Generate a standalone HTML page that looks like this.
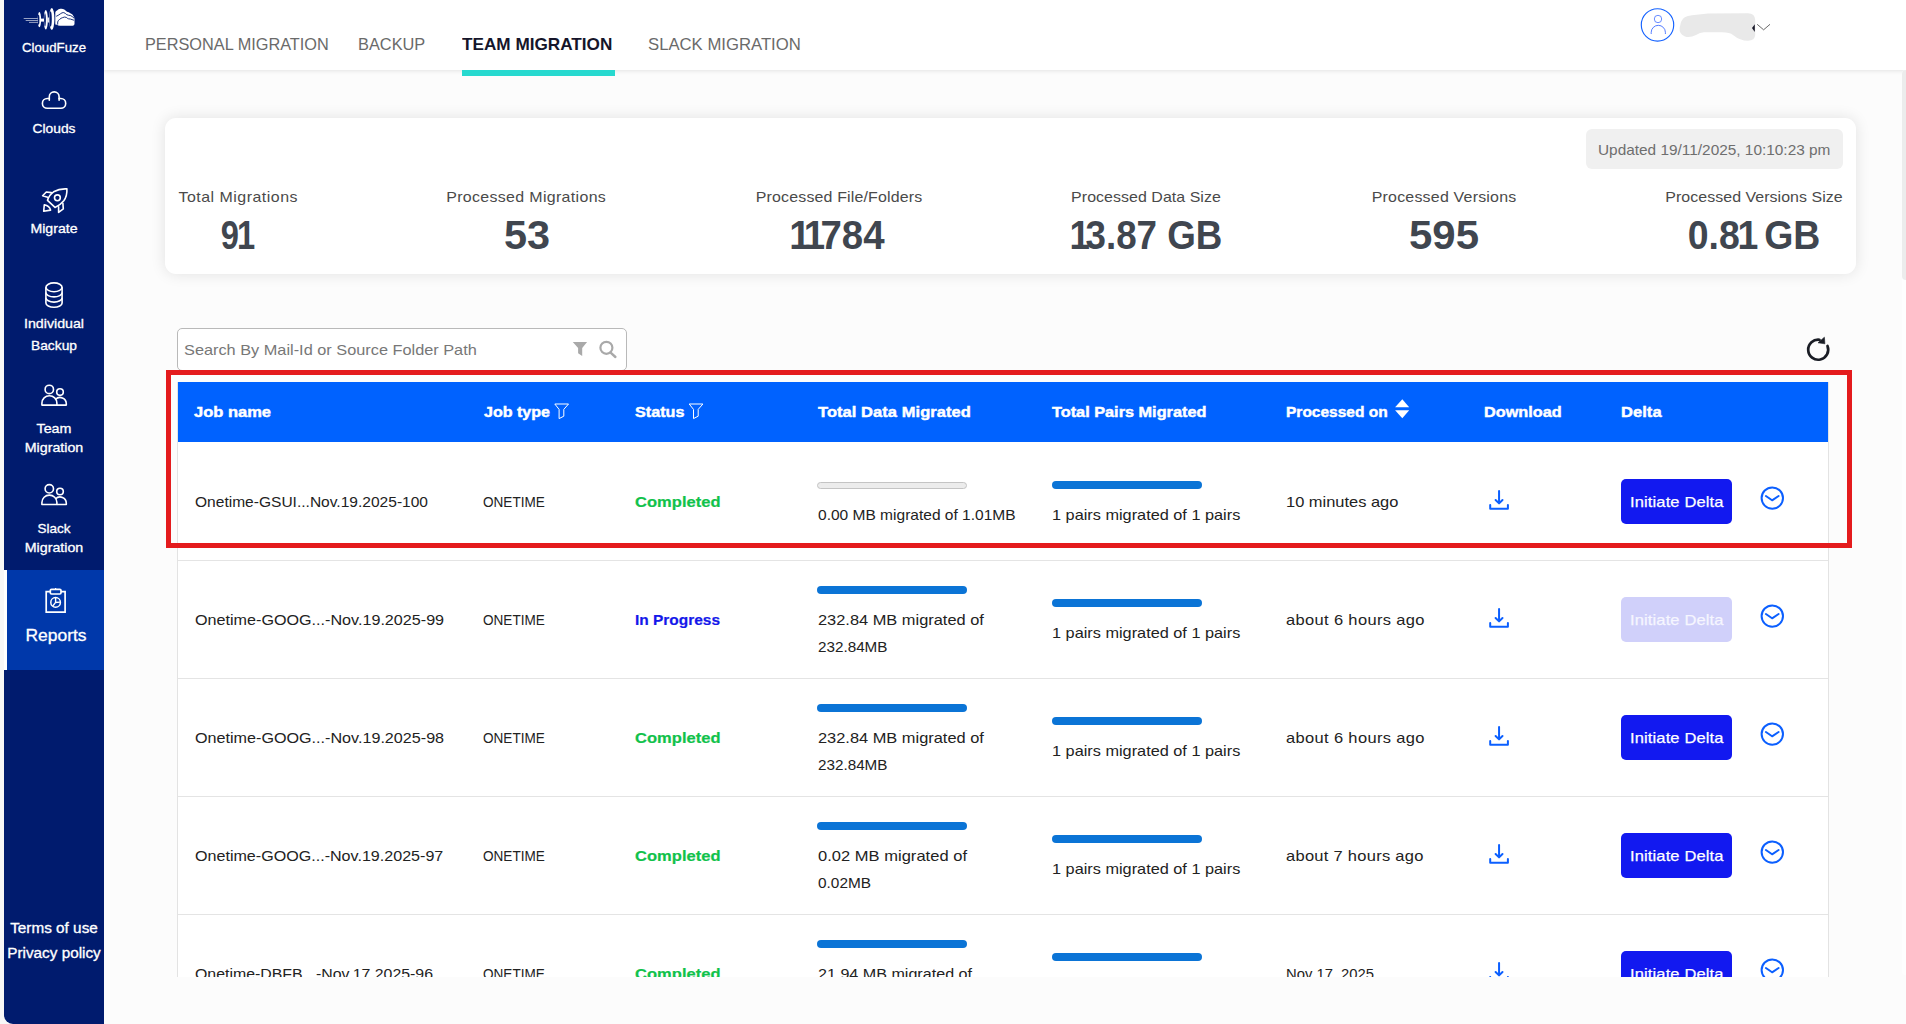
<!DOCTYPE html>
<html><head><meta charset="utf-8"><title>CloudFuze Reports</title>
<style>
html,body{margin:0;padding:0;}
html{width:1906px;height:1024px;overflow:hidden;}
#page{position:absolute;left:0;top:0;width:1906px;height:1024px;overflow:hidden;}
body{width:1906px;height:1024px;overflow:hidden;background:#f7f7f7;position:relative;font-family:"Liberation Sans",sans-serif;}
.abs{position:absolute;}
.t{position:absolute;white-space:pre;font-family:"Liberation Sans",sans-serif;}
#side{position:absolute;left:4px;top:0;width:100px;height:1024px;background:#001b6e;border-bottom-left-radius:9px;}
#side .active{position:absolute;left:0;top:570px;width:97px;height:100px;background:#0038aa;border-left:3px solid #fff;}
#main{position:absolute;left:104px;top:0;width:1802px;height:1024px;background:#fcfcfc;}
#topbar{position:absolute;left:104px;top:0;width:1802px;height:70px;background:#fff;box-shadow:0 1px 4px rgba(0,0,0,0.10);}
#tabline{position:absolute;left:462px;top:69.5px;width:153px;height:6.5px;background:#27d9cf;}
#card{position:absolute;left:165px;top:118px;width:1691px;height:156px;background:#fff;border-radius:11px;box-shadow:0 0 15px rgba(0,0,0,0.11);}
#upd{position:absolute;left:1586px;top:129px;width:257px;height:40px;background:#f0f0f0;border-radius:6px;}
#search{position:absolute;left:177px;top:328px;width:448px;height:41px;background:#fff;border:1px solid #b9b9b9;border-radius:5px;}
#table{position:absolute;left:177px;top:382px;width:1652px;height:595px;background:#fff;border-left:1px solid #e3e3e3;border-right:1px solid #e3e3e3;box-sizing:border-box;}
#thead{position:absolute;left:178px;top:382px;width:1650px;height:60px;background:#0062ff;}
.rowline{position:absolute;left:178px;width:1650px;height:1px;background:#e4e4e4;}
#redbox{position:absolute;left:166px;top:370px;width:1686px;height:178px;border:5px solid #e41b1d;box-sizing:border-box;}
.btn{position:absolute;left:1621px;width:111px;height:45px;background:#1219f0;border-radius:5px;}
.btn.dis{background:#d0d0fa;}
.bar{position:absolute;height:8px;width:150px;border-radius:4px;background:#0b74d6;}
.bar.empty{height:7px;background:#ececec;border:1px solid #c4c4c4;box-sizing:border-box;}
#clip{position:absolute;left:104px;top:977px;width:1802px;height:47px;background:#fcfcfc;}
#sbar{position:absolute;left:1902px;top:70px;width:4px;height:905px;background:#fefefe;border-radius:4px 0 0 4px;}
#sthumb{position:absolute;left:1902px;top:70px;width:4px;height:210px;background:#ececec;border-radius:4px 0 0 4px;}
svg{position:absolute;overflow:visible;}
.t i{font-style:normal;margin:0 -0.12em 0 -0.06em;}

</style></head>
<body>
<div id="page">
<div id="main"></div>
<div id="topbar"></div>
<div id="tabline"></div>
<div id="side"><div class="active"></div></div>
<div id="card"></div>
<div id="upd"></div>
<div id="search"></div>
<div id="table"></div>
<div id="thead"></div>
<div class="rowline" style="top:560px"></div>
<div class="rowline" style="top:678px"></div>
<div class="rowline" style="top:796px"></div>
<div class="rowline" style="top:914px"></div>
<div class="bar empty" style="left:817px;top:482px"></div>
<div class="bar" style="left:1052px;top:481px"></div>
<div class="bar" style="left:817px;top:586px"></div>
<div class="bar" style="left:1052px;top:599px"></div>
<div class="bar" style="left:817px;top:704px"></div>
<div class="bar" style="left:1052px;top:717px"></div>
<div class="bar" style="left:817px;top:822px"></div>
<div class="bar" style="left:1052px;top:835px"></div>
<div class="bar" style="left:817px;top:940px"></div>
<div class="bar" style="left:1052px;top:953px"></div>
<div class="btn" style="top:479px"></div>
<div class="btn dis" style="top:597px"></div>
<div class="btn" style="top:715px"></div>
<div class="btn" style="top:833px"></div>
<div class="btn" style="top:951px"></div>
<svg class="dl" style="left:1488px;top:489px" width="22" height="22" viewBox="0 0 22 22"><path d="M11.06 2V14M7.6 11L11.06 14.4L14.5 11M2.2 16V19.7H19.9V16" fill="none" stroke="#0b5fff" stroke-width="2" stroke-linecap="round" stroke-linejoin="round"/></svg>
<svg class="cc" style="left:1759px;top:485px" width="26" height="26" viewBox="0 0 26 26"><circle cx="13.3" cy="13.1" r="10.7" fill="none" stroke="#0b5fff" stroke-width="2"/><path d="M6.9 11L13.1 15.3L19.6 11" fill="none" stroke="#0b5fff" stroke-width="2" stroke-linecap="round" stroke-linejoin="round"/></svg>
<svg class="dl" style="left:1488px;top:607px" width="22" height="22" viewBox="0 0 22 22"><path d="M11.06 2V14M7.6 11L11.06 14.4L14.5 11M2.2 16V19.7H19.9V16" fill="none" stroke="#0b5fff" stroke-width="2" stroke-linecap="round" stroke-linejoin="round"/></svg>
<svg class="cc" style="left:1759px;top:603px" width="26" height="26" viewBox="0 0 26 26"><circle cx="13.3" cy="13.1" r="10.7" fill="none" stroke="#0b5fff" stroke-width="2"/><path d="M6.9 11L13.1 15.3L19.6 11" fill="none" stroke="#0b5fff" stroke-width="2" stroke-linecap="round" stroke-linejoin="round"/></svg>
<svg class="dl" style="left:1488px;top:725px" width="22" height="22" viewBox="0 0 22 22"><path d="M11.06 2V14M7.6 11L11.06 14.4L14.5 11M2.2 16V19.7H19.9V16" fill="none" stroke="#0b5fff" stroke-width="2" stroke-linecap="round" stroke-linejoin="round"/></svg>
<svg class="cc" style="left:1759px;top:721px" width="26" height="26" viewBox="0 0 26 26"><circle cx="13.3" cy="13.1" r="10.7" fill="none" stroke="#0b5fff" stroke-width="2"/><path d="M6.9 11L13.1 15.3L19.6 11" fill="none" stroke="#0b5fff" stroke-width="2" stroke-linecap="round" stroke-linejoin="round"/></svg>
<svg class="dl" style="left:1488px;top:843px" width="22" height="22" viewBox="0 0 22 22"><path d="M11.06 2V14M7.6 11L11.06 14.4L14.5 11M2.2 16V19.7H19.9V16" fill="none" stroke="#0b5fff" stroke-width="2" stroke-linecap="round" stroke-linejoin="round"/></svg>
<svg class="cc" style="left:1759px;top:839px" width="26" height="26" viewBox="0 0 26 26"><circle cx="13.3" cy="13.1" r="10.7" fill="none" stroke="#0b5fff" stroke-width="2"/><path d="M6.9 11L13.1 15.3L19.6 11" fill="none" stroke="#0b5fff" stroke-width="2" stroke-linecap="round" stroke-linejoin="round"/></svg>
<svg class="dl" style="left:1488px;top:961px" width="22" height="22" viewBox="0 0 22 22"><path d="M11.06 2V14M7.6 11L11.06 14.4L14.5 11M2.2 16V19.7H19.9V16" fill="none" stroke="#0b5fff" stroke-width="2" stroke-linecap="round" stroke-linejoin="round"/></svg>
<svg class="cc" style="left:1759px;top:957px" width="26" height="26" viewBox="0 0 26 26"><circle cx="13.3" cy="13.1" r="10.7" fill="none" stroke="#0b5fff" stroke-width="2"/><path d="M6.9 11L13.1 15.3L19.6 11" fill="none" stroke="#0b5fff" stroke-width="2" stroke-linecap="round" stroke-linejoin="round"/></svg>
<!--ICONS2-START-->
<svg id="ico" style="left:0;top:0" width="1906" height="1024" viewBox="0 0 1906 1024" fill="none">
<!-- logo -->
<g id="logo">
<path d="M23.7 18.5H38.6M25.7 20.5H38.6M29 22.4H38.6" stroke="#fff" stroke-width="0.7" opacity="0.85"/>
<ellipse cx="39.4" cy="19.7" rx="1.7" ry="7.6" fill="#fff"/>
<ellipse cx="38.6" cy="19.7" rx="0.8" ry="5.2" fill="#001b6e"/>
<path d="M41 18.6H45v3H41z" fill="#fff"/>
<ellipse cx="45.8" cy="19.8" rx="2.0" ry="9.8" fill="#fff"/>
<ellipse cx="45.0" cy="19.8" rx="0.9" ry="6.6" fill="#001b6e"/>
<path d="M47.5 17.5H51.5v5H47.5z" fill="#fff" opacity="0.9"/>
<ellipse cx="51.8" cy="19" rx="2.6" ry="11" fill="#fff"/>
<ellipse cx="50.6" cy="19" rx="1.2" ry="7.8" fill="#001b6e"/>
<path d="M55.3 24.6V12.5Q55.5 11 57 10.4Q58.5 9 60.3 8.8Q62.5 8.3 64.3 9.6Q66 10.8 67 11.8Q69 12 70.3 13.2Q72.5 14 73.4 16Q74.5 17.5 74.5 19V24Q74.4 25.8 72.6 25.8H60Q58 25.8 57 24.8Z" fill="#fff"/>
<path d="M56.2 16.3Q58 15.6 60.3 13.9Q62 12.4 63.8 12.6Q65.5 13.3 66.8 14.7Q68.5 15.4 70.3 15.5Q72 16 74.1 18.2" stroke="#001b6e" stroke-width="0.9"/>
<path d="M57.7 24.6V22Q58 20.3 59.5 19.5Q61 18 62.7 17.6Q64.5 16.6 66.3 17.4Q67.5 18.6 68.5 18.8Q70.5 18.9 72 19.6Q73.2 19.8 74.1 20.4" stroke="#001b6e" stroke-width="0.9"/>
</g>
<!-- clouds -->
<g stroke="#fff" stroke-width="1.6" stroke-linecap="round" stroke-linejoin="round">
<path d="M49.3 98.5H47.3a4.9 4.9 0 0 0 0 9.8H60.8a4.9 4.9 0 0 0 0 -9.8H59.1"/>
<path d="M49.3 100.3V96.8a4.9 4.9 0 0 1 9.8 0V100.3"/>
</g>
<!-- rocket -->
<g stroke="#fff" stroke-width="1.6" stroke-linejoin="round" stroke-linecap="round">
<path d="M66.9 188.9Q59.5 188.4 53.6 191.8Q49 195 47.5 200.3L55 207.4Q60.5 205 63.8 200.8Q67.3 196 66.9 188.9Z"/>
<circle cx="57.4" cy="197.8" r="2.9"/>
<path d="M51.3 192.6L46.3 192L42.6 195.8L47.6 197.2"/>
<path d="M58.6 206.8V212.4L63.3 208.9L62.9 203.4"/>
<path d="M44.3 204.8L43.7 211.2L50.6 210.1Q49.5 206 44.3 204.8Z"/>
</g>
<!-- database -->
<g stroke="#fff" stroke-width="1.6">
<ellipse cx="54" cy="287.3" rx="8.1" ry="4.4"/>
<path d="M45.9 287.3V302.9M62.1 287.3V302.9"/>
<path d="M45.9 292.5a8.1 4.4 0 0 0 16.2 0M45.9 297.7a8.1 4.4 0 0 0 16.2 0M45.9 302.9a8.1 4.4 0 0 0 16.2 0"/>
</g>
<!-- team -->
<g id="team" stroke="#fff" stroke-width="1.6" stroke-linejoin="round">
<circle cx="49.3" cy="389.4" r="4.2"/>
<circle cx="60" cy="392.1" r="3.3"/>
<path d="M41.9 405.1V403.2a7.5 7.5 0 0 1 15 0V405.1Z"/>
<path d="M56.9 405.1H66.3V403.8A6.3 6.3 0 0 0 55.6 399.3"/>
</g>
<g stroke="#fff" stroke-width="1.6" stroke-linejoin="round" transform="translate(0 99.4)">
<circle cx="49.3" cy="389.4" r="4.2"/>
<circle cx="60" cy="392.1" r="3.3"/>
<path d="M41.9 405.1V403.2a7.5 7.5 0 0 1 15 0V405.1Z"/>
<path d="M56.9 405.1H66.3V403.8A6.3 6.3 0 0 0 55.6 399.3"/>
</g>
<!-- reports -->
<g stroke="#fff" stroke-width="1.7" stroke-linejoin="miter">
<path d="M50.3 591.7H46.2V612.2H65.1V591.7H61"/>
<rect x="50.3" y="589.4" width="10.7" height="4.6" rx="1.2"/>
<path d="M55.6 588V589.4" stroke-width="1.2"/>
<circle cx="55.6" cy="602.4" r="4.8" stroke-width="1.5"/>
<path d="M55.6 597.6V602.4L60.3 602.1M55.6 602.4L52.6 606.2" stroke-width="1.4"/>
</g>
<!-- user -->
<circle cx="1657.5" cy="24.9" r="16.2" stroke="#1462ff" stroke-width="1.15"/>
<circle cx="1658" cy="19" r="3.7" stroke="#2a5cff" stroke-width="0.7"/>
<path d="M1651.2 34V32.4a7.1 7.1 0 0 1 14.2 0V34" stroke="#2a5cff" stroke-width="0.8"/>
<path d="M1681 22Q1683 16 1692 15.2L1708 13.5L1748 13.2Q1755 13.5 1755.2 20V35Q1755 40.5 1748 40.8Q1740 40.8 1733 35Q1730 32.5 1722 32.3H1704Q1700 32.5 1696 35Q1690 38 1685 36.5Q1679 34 1679.6 28Z" fill="#e9e9e9"/>
<path d="M1752 28.1L1754.8 24.3V31.9Z" fill="#1a1a2a"/>
<path d="M1757.2 24.3L1763.6 29.8L1770 24.3" stroke="#444" stroke-width="0.8"/>
<!-- header filter icons -->
<path d="M554.8 404H568.5L563.8 409.4V416.2L559.1 418.6V409.4Z" stroke="#fff" stroke-width="1"/>
<path d="M689.2 404H702.9L698.2 409.4V416.2L693.5 418.6V409.4Z" stroke="#fff" stroke-width="1"/>
<!-- sort -->
<path d="M1402.3 399.2L1409.2 407.2H1395.1Z" fill="#fff"/>
<path d="M1402.3 418.2L1409.2 410.2H1395.1Z" fill="#fff"/>
<!-- search box icons -->
<path d="M572.8 342.1H587.1L582.2 348V356L578.1 353.3V348Z" fill="#a9a9a9"/>
<circle cx="606.4" cy="347.8" r="6" stroke="#a9a9a9" stroke-width="2.2"/>
<path d="M610.6 352.6L615.4 357" stroke="#a9a9a9" stroke-width="2.4" stroke-linecap="round"/>
<!-- refresh -->
<path d="M1827.5 346A10 10 0 1 1 1819.5 339.8" stroke="#1a1d25" stroke-width="2.7" stroke-linecap="round"/>
<path d="M1818 342.8L1824.4 337.2L1824.9 343.8Z" fill="#1a1d25" stroke="#1a1d25" stroke-width="0.6" stroke-linejoin="round"/>
</svg>
<!--ICONS2-END-->
<div id="redbox"></div>
<div id="texts">
<span class="t" style="left:-96px;width:300px;text-align:center;transform:scaleX(1.0179);transform-origin:50% 50%;top:38.5px;font-size:13px;line-height:18px;color:#fff;-webkit-text-stroke:0.3px #fff;">CloudFuze</span>
<span class="t" style="left:-96px;width:300px;text-align:center;transform:scaleX(1.0625);transform-origin:50% 50%;top:119.5px;font-size:13px;line-height:18px;color:#fff;-webkit-text-stroke:0.3px #fff;">Clouds</span>
<span class="t" style="left:-96px;width:300px;text-align:center;transform:scaleX(1.084);transform-origin:50% 50%;top:219.5px;font-size:13px;line-height:18px;color:#fff;-webkit-text-stroke:0.3px #fff;">Migrate</span>
<span class="t" style="left:-96px;width:300px;text-align:center;transform:scaleX(1.0922);transform-origin:50% 50%;top:314.5px;font-size:13px;line-height:18px;color:#fff;-webkit-text-stroke:0.3px #fff;">Individual</span>
<span class="t" style="left:-96px;width:300px;text-align:center;transform:scaleX(1.0605);transform-origin:50% 50%;top:336.5px;font-size:13px;line-height:18px;color:#fff;-webkit-text-stroke:0.3px #fff;">Backup</span>
<span class="t" style="left:-96px;width:300px;text-align:center;text-indent:0.01px;transform:scaleX(1.1);transform-origin:50% 50%;top:419.5px;font-size:13px;line-height:18px;color:#fff;letter-spacing:0.01px;-webkit-text-stroke:0.3px #fff;">Team</span>
<span class="t" style="left:-96px;width:300px;text-align:center;transform:scaleX(1.0941);transform-origin:50% 50%;top:439.0px;font-size:13px;line-height:18px;color:#fff;-webkit-text-stroke:0.3px #fff;">Migration</span>
<span class="t" style="left:-96px;width:300px;text-align:center;transform:scaleX(1.0378);transform-origin:50% 50%;top:519.5px;font-size:13px;line-height:18px;color:#fff;-webkit-text-stroke:0.3px #fff;">Slack</span>
<span class="t" style="left:-96px;width:300px;text-align:center;transform:scaleX(1.0941);transform-origin:50% 50%;top:539.0px;font-size:13px;line-height:18px;color:#fff;-webkit-text-stroke:0.3px #fff;">Migration</span>
<span class="t" style="left:-94.4px;width:300px;text-align:center;transform:scaleX(1.0574);transform-origin:50% 50%;top:623.7px;font-size:16.5px;line-height:23px;color:#fff;-webkit-text-stroke:0.3px #fff;">Reports</span>
<span class="t" style="left:-95.8px;width:300px;text-align:center;transform:scaleX(1.0931);transform-origin:50% 50%;top:917.5px;font-size:14px;line-height:20px;color:#fff;-webkit-text-stroke:0.3px #fff;">Terms of use</span>
<span class="t" style="left:-95.8px;width:300px;text-align:center;transform:scaleX(1.0924);transform-origin:50% 50%;top:942.5px;font-size:14px;line-height:20px;color:#fff;-webkit-text-stroke:0.3px #fff;">Privacy policy</span>
<span class="t" style="left:145.3px;transform:scaleX(0.9585);transform-origin:0 50%;top:33.0px;font-size:17px;line-height:24px;color:#6a6a6a;">PERSONAL MIGRATION</span>
<span class="t" style="left:358.2px;transform:scaleX(0.9625);transform-origin:0 50%;top:33.0px;font-size:17px;line-height:24px;color:#6a6a6a;">BACKUP</span>
<span class="t" style="left:462px;transform:scaleX(1.0094);transform-origin:0 50%;top:33.0px;font-size:17px;line-height:24px;font-weight:700;color:#15152a;">TEAM MIGRATION</span>
<span class="t" style="left:648px;transform:scaleX(0.9823);transform-origin:0 50%;top:33.0px;font-size:17px;line-height:24px;color:#6a6a6a;">SLACK MIGRATION</span>
<span class="t" style="left:87.8px;width:300px;text-align:center;text-indent:0.44px;transform:scaleX(1.1);transform-origin:50% 50%;top:187.0px;font-size:14.5px;line-height:20px;color:#4a4a4a;letter-spacing:0.44px;">Total Migrations</span>
<span class="t" style="left:85.8px;width:300px;text-align:center;transform:scaleX(0.8174);transform-origin:50% 50%;top:207.4px;font-size:40px;line-height:56px;font-weight:700;color:#40464f;">9<i>1</i></span>
<span class="t" style="left:376.3px;width:300px;text-align:center;text-indent:0.3px;transform:scaleX(1.1);transform-origin:50% 50%;top:187.0px;font-size:14.5px;line-height:20px;color:#4a4a4a;letter-spacing:0.3px;">Processed Migrations</span>
<span class="t" style="left:377.3px;width:300px;text-align:center;transform:scaleX(1.036);transform-origin:50% 50%;top:207.4px;font-size:40px;line-height:56px;font-weight:700;color:#40464f;">53</span>
<span class="t" style="left:688.5px;width:300px;text-align:center;text-indent:0.14px;transform:scaleX(1.1);transform-origin:50% 50%;top:187.0px;font-size:14.5px;line-height:20px;color:#4a4a4a;letter-spacing:0.14px;">Processed File/Folders</span>
<span class="t" style="left:688.0px;width:300px;text-align:center;transform:scaleX(0.96);transform-origin:50% 50%;top:207.4px;font-size:40px;line-height:56px;font-weight:700;color:#40464f;"><i>1</i><i>1</i>784</span>
<span class="t" style="left:996px;width:300px;text-align:center;text-indent:0.04px;transform:scaleX(1.1);transform-origin:50% 50%;top:187.0px;font-size:14.5px;line-height:20px;color:#4a4a4a;letter-spacing:0.04px;">Processed Data Size</span>
<span class="t" style="left:997.4px;width:300px;text-align:center;transform:scaleX(0.9187);transform-origin:50% 50%;top:207.4px;font-size:40px;line-height:56px;font-weight:700;color:#40464f;"><i>1</i>3.87 GB</span>
<span class="t" style="left:1294px;width:300px;text-align:center;text-indent:0.19px;transform:scaleX(1.1);transform-origin:50% 50%;top:187.0px;font-size:14.5px;line-height:20px;color:#4a4a4a;letter-spacing:0.19px;">Processed Versions</span>
<span class="t" style="left:1294.2px;width:300px;text-align:center;transform:scaleX(1.0487);transform-origin:50% 50%;top:207.4px;font-size:40px;line-height:56px;font-weight:700;color:#40464f;">595</span>
<span class="t" style="left:1604px;width:300px;text-align:center;text-indent:0.04px;transform:scaleX(1.1);transform-origin:50% 50%;top:187.0px;font-size:14.5px;line-height:20px;color:#4a4a4a;letter-spacing:0.04px;">Processed Versions Size</span>
<span class="t" style="left:1604.3px;width:300px;text-align:center;transform:scaleX(0.9351);transform-origin:50% 50%;top:207.4px;font-size:40px;line-height:56px;font-weight:700;color:#40464f;">0.8<i>1</i> GB</span>
<span class="t" style="left:1598px;transform:scaleX(1.0257);transform-origin:0 50%;top:138.9px;font-size:15px;line-height:21px;color:#6e6e6e;">Updated 19/11/2025, 10:10:23 pm</span>
<span class="t" style="left:184.2px;transform:scaleX(1.0873);transform-origin:0 50%;top:339.1px;font-size:15px;line-height:21px;color:#777;">Search By Mail-Id or Source Folder Path</span>
<span class="t" style="left:194px;transform:scaleX(1.0995);transform-origin:0 50%;top:401.2px;font-size:15px;line-height:21px;font-weight:700;color:#fff;-webkit-text-stroke:0.45px #fff;">Job name</span>
<span class="t" style="left:483.8px;transform:scaleX(1.0699);transform-origin:0 50%;top:401.2px;font-size:15px;line-height:21px;font-weight:700;color:#fff;-webkit-text-stroke:0.45px #fff;">Job type</span>
<span class="t" style="left:634.8px;transform:scaleX(1.0776);transform-origin:0 50%;top:401.2px;font-size:15px;line-height:21px;font-weight:700;color:#fff;-webkit-text-stroke:0.45px #fff;">Status</span>
<span class="t" style="left:817.6px;transform:scaleX(1.1);transform-origin:0 50%;top:401.2px;font-size:15px;line-height:21px;font-weight:700;color:#fff;letter-spacing:0.05px;-webkit-text-stroke:0.45px #fff;">Total Data Migrated</span>
<span class="t" style="left:1051.7px;transform:scaleX(1.0853);transform-origin:0 50%;top:401.2px;font-size:15px;line-height:21px;font-weight:700;color:#fff;-webkit-text-stroke:0.45px #fff;">Total Pairs Migrated</span>
<span class="t" style="left:1286.4px;transform:scaleX(1.0338);transform-origin:0 50%;top:401.2px;font-size:15px;line-height:21px;font-weight:700;color:#fff;-webkit-text-stroke:0.45px #fff;">Processed on</span>
<span class="t" style="left:1484.4px;transform:scaleX(1.0827);transform-origin:0 50%;top:401.2px;font-size:15px;line-height:21px;font-weight:700;color:#fff;-webkit-text-stroke:0.45px #fff;">Download</span>
<span class="t" style="left:1621.4px;transform:scaleX(1.1);transform-origin:0 50%;top:401.2px;font-size:15px;line-height:21px;font-weight:700;color:#fff;letter-spacing:0.06px;-webkit-text-stroke:0.45px #fff;">Delta</span>
<span class="t" style="left:194.6px;transform:scaleX(1.0363);transform-origin:0 50%;top:491.3px;font-size:15px;line-height:21px;color:#222;">Onetime-GSUI...Nov.19.2025-100</span>
<span class="t" style="left:483.4px;transform:scaleX(0.9043);transform-origin:0 50%;top:491.3px;font-size:15px;line-height:21px;color:#222;">ONETIME</span>
<span class="t" style="left:634.5px;transform:scaleX(1.1);transform-origin:0 50%;top:491.3px;font-size:15px;line-height:21px;font-weight:700;color:#10c24b;letter-spacing:0.04px;-webkit-text-stroke:0.2px #10c24b;">Completed</span>
<span class="t" style="left:1285.9px;transform:scaleX(1.0958);transform-origin:0 50%;top:491.3px;font-size:15px;line-height:21px;color:#222;">10 minutes ago</span>
<span class="t" style="left:817.5px;transform:scaleX(1.0349);transform-origin:0 50%;top:503.5px;font-size:15px;line-height:21px;color:#222;">0.00 MB migrated of 1.01MB</span>
<span class="t" style="left:1051.9px;transform:scaleX(1.0858);transform-origin:0 50%;top:503.5px;font-size:15px;line-height:21px;color:#222;">1 pairs migrated of 1 pairs</span>
<span class="t" style="left:1629.9px;transform:scaleX(1.1);transform-origin:0 50%;top:491.2px;font-size:15px;line-height:21px;color:#fff;letter-spacing:0.12px;-webkit-text-stroke:0.25px #fff;">Initiate Delta</span>
<span class="t" style="left:194.6px;transform:scaleX(1.0761);transform-origin:0 50%;top:609.3px;font-size:15px;line-height:21px;color:#222;">Onetime-GOOG...-Nov.19.2025-99</span>
<span class="t" style="left:483.4px;transform:scaleX(0.9043);transform-origin:0 50%;top:609.3px;font-size:15px;line-height:21px;color:#222;">ONETIME</span>
<span class="t" style="left:634.8px;transform:scaleX(1.0299);transform-origin:0 50%;top:609.3px;font-size:15px;line-height:21px;font-weight:700;color:#1418ea;-webkit-text-stroke:0.2px #1418ea;">In Progress</span>
<span class="t" style="left:1285.9px;transform:scaleX(1.1);transform-origin:0 50%;top:609.3px;font-size:15px;line-height:21px;color:#222;letter-spacing:0.31px;">about 6 hours ago</span>
<span class="t" style="left:817.5px;transform:scaleX(1.0931);transform-origin:0 50%;top:609.3px;font-size:15px;line-height:21px;color:#222;">232.84 MB migrated of</span>
<span class="t" style="left:817.5px;transform:scaleX(1.0162);transform-origin:0 50%;top:636.4px;font-size:15px;line-height:21px;color:#222;">232.84MB</span>
<span class="t" style="left:1051.9px;transform:scaleX(1.0858);transform-origin:0 50%;top:621.5px;font-size:15px;line-height:21px;color:#222;">1 pairs migrated of 1 pairs</span>
<span class="t" style="left:1629.9px;transform:scaleX(1.1);transform-origin:0 50%;top:609.2px;font-size:15px;line-height:21px;color:#f6f6ff;letter-spacing:0.12px;-webkit-text-stroke:0.25px #f6f6ff;">Initiate Delta</span>
<span class="t" style="left:194.6px;transform:scaleX(1.0761);transform-origin:0 50%;top:727.3px;font-size:15px;line-height:21px;color:#222;">Onetime-GOOG...-Nov.19.2025-98</span>
<span class="t" style="left:483.4px;transform:scaleX(0.9043);transform-origin:0 50%;top:727.3px;font-size:15px;line-height:21px;color:#222;">ONETIME</span>
<span class="t" style="left:634.5px;transform:scaleX(1.1);transform-origin:0 50%;top:727.3px;font-size:15px;line-height:21px;font-weight:700;color:#10c24b;letter-spacing:0.04px;-webkit-text-stroke:0.2px #10c24b;">Completed</span>
<span class="t" style="left:1285.9px;transform:scaleX(1.1);transform-origin:0 50%;top:727.3px;font-size:15px;line-height:21px;color:#222;letter-spacing:0.31px;">about 6 hours ago</span>
<span class="t" style="left:817.5px;transform:scaleX(1.0931);transform-origin:0 50%;top:727.3px;font-size:15px;line-height:21px;color:#222;">232.84 MB migrated of</span>
<span class="t" style="left:817.5px;transform:scaleX(1.0162);transform-origin:0 50%;top:754.4px;font-size:15px;line-height:21px;color:#222;">232.84MB</span>
<span class="t" style="left:1051.9px;transform:scaleX(1.0858);transform-origin:0 50%;top:739.5px;font-size:15px;line-height:21px;color:#222;">1 pairs migrated of 1 pairs</span>
<span class="t" style="left:1629.9px;transform:scaleX(1.1);transform-origin:0 50%;top:727.2px;font-size:15px;line-height:21px;color:#fff;letter-spacing:0.12px;-webkit-text-stroke:0.25px #fff;">Initiate Delta</span>
<span class="t" style="left:194.6px;transform:scaleX(1.0726);transform-origin:0 50%;top:845.3px;font-size:15px;line-height:21px;color:#222;">Onetime-GOOG...-Nov.19.2025-97</span>
<span class="t" style="left:483.4px;transform:scaleX(0.9043);transform-origin:0 50%;top:845.3px;font-size:15px;line-height:21px;color:#222;">ONETIME</span>
<span class="t" style="left:634.5px;transform:scaleX(1.1);transform-origin:0 50%;top:845.3px;font-size:15px;line-height:21px;font-weight:700;color:#10c24b;letter-spacing:0.04px;-webkit-text-stroke:0.2px #10c24b;">Completed</span>
<span class="t" style="left:1285.9px;transform:scaleX(1.1);transform-origin:0 50%;top:845.3px;font-size:15px;line-height:21px;color:#222;letter-spacing:0.25px;">about 7 hours ago</span>
<span class="t" style="left:817.5px;transform:scaleX(1.1);transform-origin:0 50%;top:845.3px;font-size:15px;line-height:21px;color:#222;letter-spacing:0.02px;">0.02 MB migrated of</span>
<span class="t" style="left:817.5px;transform:scaleX(1.0251);transform-origin:0 50%;top:872.4px;font-size:15px;line-height:21px;color:#222;">0.02MB</span>
<span class="t" style="left:1051.9px;transform:scaleX(1.0858);transform-origin:0 50%;top:857.5px;font-size:15px;line-height:21px;color:#222;">1 pairs migrated of 1 pairs</span>
<span class="t" style="left:1629.9px;transform:scaleX(1.1);transform-origin:0 50%;top:845.2px;font-size:15px;line-height:21px;color:#fff;letter-spacing:0.12px;-webkit-text-stroke:0.25px #fff;">Initiate Delta</span>
<span class="t" style="left:194.6px;transform:scaleX(1.0586);transform-origin:0 50%;top:963.3px;font-size:15px;line-height:21px;color:#222;">Onetime-DBFB...-Nov.17.2025-96</span>
<span class="t" style="left:483.4px;transform:scaleX(0.9043);transform-origin:0 50%;top:963.3px;font-size:15px;line-height:21px;color:#222;">ONETIME</span>
<span class="t" style="left:634.5px;transform:scaleX(1.1);transform-origin:0 50%;top:963.3px;font-size:15px;line-height:21px;font-weight:700;color:#10c24b;letter-spacing:0.04px;-webkit-text-stroke:0.2px #10c24b;">Completed</span>
<span class="t" style="left:1285.9px;transform:scaleX(0.9862);transform-origin:0 50%;top:963.3px;font-size:15px;line-height:21px;color:#222;">Nov 17, 2025</span>
<span class="t" style="left:817.5px;transform:scaleX(1.0738);transform-origin:0 50%;top:963.3px;font-size:15px;line-height:21px;color:#222;">21.94 MB migrated of</span>
<span class="t" style="left:817.5px;transform:scaleX(0.916);transform-origin:0 50%;top:990.4px;font-size:15px;line-height:21px;color:#222;">21.94MB</span>
<span class="t" style="left:1051.9px;transform:scaleX(1.0858);transform-origin:0 50%;top:975.5px;font-size:15px;line-height:21px;color:#222;">1 pairs migrated of 1 pairs</span>
<span class="t" style="left:1629.9px;transform:scaleX(1.1);transform-origin:0 50%;top:963.2px;font-size:15px;line-height:21px;color:#fff;letter-spacing:0.12px;-webkit-text-stroke:0.25px #fff;">Initiate Delta</span>
</div>
<div id="clip"></div>
<div id="sbar"></div>
<div id="sthumb"></div>

</div>
</body></html>
